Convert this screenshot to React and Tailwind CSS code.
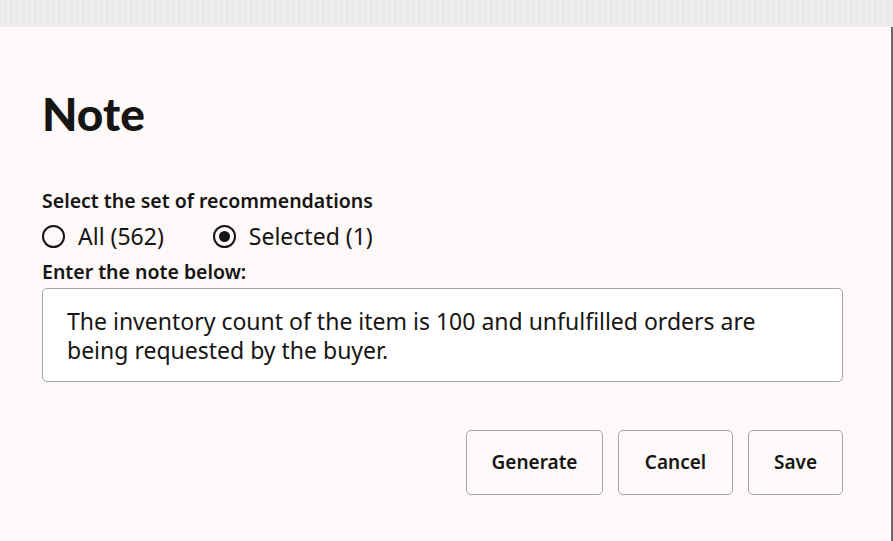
import React, { useState } from 'react'

const font = { fontFamily: '"Noto Sans", "Open Sans", sans-serif' }

function Radio({ checked, label, onClick }) {
  return (
    <button onClick={onClick} className="flex items-center gap-[13px] text-[23px] text-[#161513]">
      <span className="w-[23px] h-[23px] rounded-full border-2 border-[#161513] flex items-center justify-center">
        {checked && <span className="w-[11px] h-[11px] rounded-full bg-[#161513]" />}
      </span>
      <span className="leading-none">{label}</span>
    </button>
  )
}

export default function App() {
  const [scope, setScope] = useState('selected')

  return (
    <div className="w-full h-[541px] flex flex-col bg-[#fcf9f8] overflow-hidden" style={font}>
      <div className="h-[27px] shrink-0 bg-[#ecebea] bg-[repeating-linear-gradient(90deg,#e6e4e3_0px,#f3f2f1_2px,#e9e7e6_4px,#efeeed_6px)]" />
      <div className="flex-1 border-r-2 border-[#6b6967] pl-[42px] pr-[48px] text-[#161513]">
        <h1
          className="mt-[64px] text-[46px] leading-none font-black"
          style={{ fontFamily: 'Lato, "Noto Sans", sans-serif' }}
        >
          Note
        </h1>
        <p className="mt-[54px] text-[19.5px] font-semibold leading-none">Select the set of recommendations</p>
        <div className="mt-[14px] flex items-center gap-[49px]">
          <Radio label="All (562)" checked={scope === 'all'} onClick={() => setScope('all')} />
          <Radio label="Selected (1)" checked={scope === 'selected'} onClick={() => setScope('selected')} />
        </div>
        <p className="mt-[14px] text-[19.5px] font-semibold leading-none">Enter the note below:</p>
        <div className="mt-[7px] h-[94px] rounded-[5px] border border-[#a7a5a3] bg-white px-[24px] pt-[18px] text-[23px] leading-[29px]">
          The inventory count of the item is 100 and unfulfilled orders are
          <br />
          being requested by the buyer.
        </div>
        <div className="mt-[48px] flex justify-end gap-[15px]">
          <button className="w-[137px] h-[65px] rounded-[5px] border border-[#a7a5a3] text-[19px] font-semibold">Generate</button>
          <button className="w-[115px] h-[65px] rounded-[5px] border border-[#a7a5a3] text-[19px] font-semibold">Cancel</button>
          <button className="w-[95px] h-[65px] rounded-[5px] border border-[#a7a5a3] text-[19px] font-semibold">Save</button>
        </div>
      </div>
    </div>
  )
}
